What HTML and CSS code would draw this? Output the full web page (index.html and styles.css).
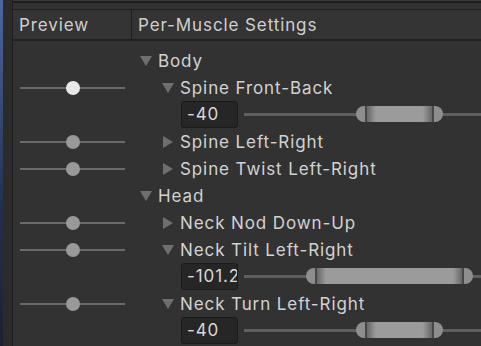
FILE: index.html
```html
<!DOCTYPE html>
<html lang="en">
<head>
    <meta charset="UTF-8">
    <title>Per-Muscle Settings</title>
    <link rel="stylesheet" href="styles.css">
</head>
<body>

<div class="desktop-edge"></div>
<div class="gutter"></div>

<div class="panel">
    <div class="toolbar"></div>

    <!-- Column headers -->
    <div class="header">
        <div class="header-cell preview-col">Preview</div>
        <div class="header-cell">Per-Muscle Settings</div>
    </div>

    <div class="rows">
        <!-- Body -->
        <div class="row">
            <div class="preview-col"></div>
            <div class="tree lvl-1"><span class="fold open"></span>Body</div>
        </div>
        <div class="row">
            <div class="preview-col"><div class="slider"><span class="knob active" style="left: 46px"></span></div></div>
            <div class="tree lvl-2"><span class="fold open"></span>Spine Front-Back</div>
        </div>
        <div class="row">
            <div class="preview-col"></div>
            <div class="limits">
                <div class="num-field">-40</div>
                <div class="range"><span class="range-thumb" style="left: 112px; width: 87px"></span></div>
            </div>
        </div>
        <div class="row">
            <div class="preview-col"><div class="slider"><span class="knob" style="left: 46px"></span></div></div>
            <div class="tree lvl-2"><span class="fold"></span>Spine Left-Right</div>
        </div>
        <div class="row">
            <div class="preview-col"><div class="slider"><span class="knob" style="left: 46px"></span></div></div>
            <div class="tree lvl-2"><span class="fold"></span>Spine Twist Left-Right</div>
        </div>

        <!-- Head -->
        <div class="row">
            <div class="preview-col"></div>
            <div class="tree lvl-1"><span class="fold open"></span>Head</div>
        </div>
        <div class="row">
            <div class="preview-col"><div class="slider"><span class="knob" style="left: 46px"></span></div></div>
            <div class="tree lvl-2"><span class="fold"></span>Neck Nod Down-Up</div>
        </div>
        <div class="row">
            <div class="preview-col"><div class="slider"><span class="knob" style="left: 46px"></span></div></div>
            <div class="tree lvl-2"><span class="fold open"></span>Neck Tilt Left-Right</div>
        </div>
        <div class="row">
            <div class="preview-col"></div>
            <div class="limits">
                <div class="num-field">-101.2</div>
                <div class="range"><span class="range-thumb" style="left: 62px; width: 167px"></span></div>
            </div>
        </div>
        <div class="row">
            <div class="preview-col"><div class="slider"><span class="knob" style="left: 46px"></span></div></div>
            <div class="tree lvl-2"><span class="fold open"></span>Neck Turn Left-Right</div>
        </div>
        <div class="row">
            <div class="preview-col"></div>
            <div class="limits">
                <div class="num-field">-40</div>
                <div class="range"><span class="range-thumb" style="left: 112px; width: 87px"></span></div>
            </div>
        </div>
    </div>
</div>

</body>
</html>
```

FILE: styles.css
```css
body {
    margin: 0;
    padding: 0;
    height: 346px;
    overflow: hidden;
    display: flex;
    background-color: #323232;
    font-family: Inter, "Noto Sans", sans-serif;
    font-size: 17px;
    letter-spacing: 0.9px;
    color: #d2d2d2;
}

.desktop-edge {
    width: 3px;
    background: linear-gradient(to bottom, #4d66a3, #22304f 60%, #1b2132);
}

.gutter {
    width: 9px;
    background-color: #2b2b2b;
    border-right: 1px solid #1e1e1e;
}

.panel {
    flex: 1;
    display: flex;
    flex-direction: column;
    min-width: 0;
}

.toolbar {
    height: 8px;
    border-top: 1px solid #3a3a3a;
    box-shadow: inset 0 1px 0 #1e1e1e, inset 0 2px 0 #1e1e1e;
    border-bottom: 1px solid #1e1e1e;
    background-color: #323232;
}

.header {
    display: flex;
    height: 29px;
    border-bottom: 2px solid #222;
    background-color: #343434;
}

.header-cell {
    display: flex;
    align-items: center;
    padding-left: 6px;
    color: #cfcfcf;
}

.preview-col {
    width: 119px;
    flex-shrink: 0;
    box-sizing: border-box;
}

.header .preview-col {
    border-right: 1px solid #1f1f1f;
}

.rows {
    padding-top: 6px;
}

.row {
    display: flex;
    height: 27px;
    align-items: center;
}

/* preview slider */
.slider {
    position: relative;
    margin-left: 7px;
    width: 105px;
    height: 2px;
    background-color: #6a6a6a;
}

.knob {
    position: absolute;
    top: -6px;
    width: 14px;
    height: 14px;
    border-radius: 50%;
    background-color: #999;
}

.knob.active {
    background-color: #e8e8e8;
}

/* tree labels */
.tree {
    display: flex;
    align-items: center;
    white-space: nowrap;
}

.lvl-1 {
    padding-left: 8px;
}

.lvl-2 {
    padding-left: 30px;
}

.fold {
    width: 18px;
    height: 12px;
    flex-shrink: 0;
    position: relative;
}

.fold::before {
    content: "";
    position: absolute;
    left: 1px;
    top: 0;
    border-top: 6px solid transparent;
    border-bottom: 6px solid transparent;
    border-left: 10px solid #6f6f6f;
}

.fold.open::before {
    left: 0;
    top: 1px;
    border-left: 6px solid transparent;
    border-right: 6px solid transparent;
    border-top: 10px solid #6f6f6f;
    border-bottom: none;
}

/* limit row */
.limits {
    flex: 1;
    display: flex;
    align-items: center;
    gap: 6px;
    padding-left: 49px;
    height: 100%;
}

.num-field {
    width: 57px;
    height: 27px;
    box-sizing: border-box;
    flex-shrink: 0;
    background-color: #262626;
    border: 1px solid #1b1b1b;
    border-radius: 3px;
    padding: 0 0 0 5px;
    line-height: 25px;
    overflow: hidden;
    white-space: nowrap;
    color: #d8d8d8;
}

.range {
    flex: 1;
    position: relative;
    height: 3px;
    background-color: #5f5f5f;
}

.range-thumb {
    position: absolute;
    top: -7px;
    height: 16px;
    border-radius: 8px;
    background: linear-gradient(to right,
        #8e8e8e 0, #8e8e8e 9px,
        #474747 9px, #474747 11px,
        #676767 11px, #9b9b9b 20px,
        #9b9b9b calc(100% - 20px),
        #676767 calc(100% - 11px),
        #474747 calc(100% - 11px), #474747 calc(100% - 9px),
        #8e8e8e calc(100% - 9px));
}
```
